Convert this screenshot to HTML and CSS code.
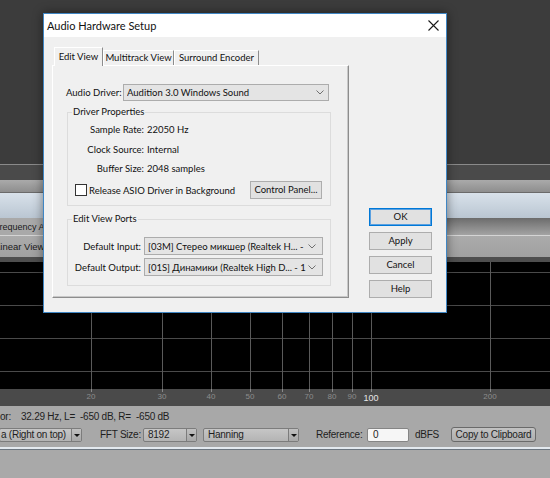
FILE: index.html
```html
<!DOCTYPE html>
<html>
<head>
<meta charset="utf-8">
<title>Audio Hardware Setup</title>
<link rel="stylesheet" href="styles.css">
</head>
<body>
<div class="app">
  <div class="top"></div>
  <div class="ln1"></div>
  <div class="darkband"></div>
  <div class="grayband"></div>
  <div class="ln2"></div>
  <div class="blueband"></div>
  <div class="tabstrip"><span class="apptab">Frequency Analysis</span></div>
  <div class="ln3"></div>
  <div class="viewbar"><span class="viewcombo">Linear View</span></div>
  <div class="ln4"></div>
  <div class="plot">
    <div class="hg" style="top:10px"></div>
    <div class="hg" style="top:43px"></div>
    <div class="hg" style="top:76px"></div>
    <div class="hg" style="top:109px"></div>
    <div class="vg" style="left:91px"></div>
    <div class="vg" style="left:162px"></div>
    <div class="vg" style="left:211px"></div>
    <div class="vg" style="left:250px"></div>
    <div class="vg" style="left:282px"></div>
    <div class="vg" style="left:309px"></div>
    <div class="vg" style="left:332px"></div>
    <div class="vg" style="left:352px"></div>
    <div class="vg" style="left:371px"></div>
    <div class="vg" style="left:490px"></div>
  </div>
  <div class="axis">
    <div class="tick" style="left:91px"></div><span class="alab" style="left:91px">20</span>
    <div class="tick" style="left:162px"></div><span class="alab" style="left:162px">30</span>
    <div class="tick" style="left:211px"></div><span class="alab" style="left:211px">40</span>
    <div class="tick" style="left:250px"></div><span class="alab" style="left:250px">50</span>
    <div class="tick" style="left:282px"></div><span class="alab" style="left:282px">60</span>
    <div class="tick" style="left:309px"></div><span class="alab" style="left:309px">70</span>
    <div class="tick" style="left:332px"></div><span class="alab" style="left:332px">80</span>
    <div class="tick" style="left:352px"></div><span class="alab" style="left:352px">90</span>
    <div class="tick" style="left:371px"></div><span class="alab major" style="left:371px">100</span>
    <div class="tick" style="left:490px"></div><span class="alab" style="left:490px">200</span>
  </div>
  <div class="status">
    <div class="srow1"><span class="cur">or:</span><span class="curval">32.29 Hz, L=&nbsp; -650 dB, R=&nbsp; -650 dB</span></div>
    <div class="srow2">
      <div class="scombo sc1"><span class="sctext">a (Right on top)</span><span class="scarrow"></span></div>
      <span class="slabel fftl">FFT Size:</span>
      <div class="scombo sc2"><span class="sctext">8192</span><span class="scarrow"></span></div>
      <div class="scombo sc3"><span class="sctext">Hanning</span><span class="scarrow"></span></div>
      <span class="slabel refl">Reference:</span>
      <div class="sinput">0</div>
      <span class="slabel dbfs">dBFS</span>
      <div class="sbtn">Copy to Clipboard</div>
    </div>
  </div>
  <div class="ln5"></div>
  <div class="ln6"></div>
  <div class="rest"></div>
</div>

<div class="dialog">
  <div class="titlebar">
    <span class="title">Audio Hardware Setup</span>
    <svg class="close" width="11" height="11" viewBox="0 0 11 11"><path d="M0.5 0.5L10.5 10.5M10.5 0.5L0.5 10.5" stroke="#1a1a1a" stroke-width="1.1" fill="none"/></svg>
  </div>
  <div class="dbody">
    <div class="leftcol">
      <div class="tabs">
        <div class="tab sel">Edit View</div>
        <div class="tab t2">Multitrack View</div>
        <div class="tab t3">Surround Encoder</div>
      </div>
      <div class="panel">
        <div class="driverrow">
          <span class="drvlbl">Audio Driver:</span>
          <div class="combo drvcombo"><span class="ctext">Audition 3.0 Windows Sound</span><svg class="chev" width="8" height="5" viewBox="0 0 8 5"><path d="M0.5 0.5L4 4L7.5 0.5" stroke="#707070" stroke-width="1" fill="none"/></svg></div>
        </div>
        <fieldset class="grp g1">
          <legend>Driver Properties</legend>
          <div class="props">
            <span class="k">Sample Rate:</span><span class="v">22050 Hz</span>
            <span class="k">Clock Source:</span><span class="v">Internal</span>
            <span class="k">Buffer Size:</span><span class="v">2048 samples</span>
          </div>
          <div class="chkrow">
            <span class="box"></span><span class="chklbl">Release ASIO Driver in Background</span>
            <div class="btn cpbtn">Control Panel...</div>
          </div>
        </fieldset>
        <fieldset class="grp g2">
          <legend>Edit View Ports</legend>
          <div class="ports">
            <span class="k">Default Input:</span>
            <div class="combo pcombo"><span class="ctext">[03M] Стерео микшер (Realtek H... -</span><svg class="chev" width="8" height="5" viewBox="0 0 8 5"><path d="M0.5 0.5L4 4L7.5 0.5" stroke="#707070" stroke-width="1" fill="none"/></svg></div>
            <span class="k">Default Output:</span>
            <div class="combo pcombo"><span class="ctext">[01S] Динамики (Realtek High D... - 1</span><svg class="chev" width="8" height="5" viewBox="0 0 8 5"><path d="M0.5 0.5L4 4L7.5 0.5" stroke="#707070" stroke-width="1" fill="none"/></svg></div>
          </div>
        </fieldset>
      </div>
    </div>
    <div class="btncol">
      <div class="btn dbtn def">OK</div>
      <div class="btn dbtn">Apply</div>
      <div class="btn dbtn">Cancel</div>
      <div class="btn dbtn">Help</div>
    </div>
  </div>
</div>
</body>
</html>
```

FILE: styles.css
```css
* { box-sizing: border-box; }
html, body { margin: 0; padding: 0; }
body {
  width: 550px;
  height: 478px;
  overflow: hidden;
  position: relative;
  background: #3b3b3b;
  font-family: "Liberation Sans", Arial, sans-serif;
}

/* ---------- background application ---------- */
.app { display: flex; flex-direction: column; height: 478px; }
.app > div { flex: none; }
.top { height: 164px; background: #3c3c3c; }
.ln1 { height: 1px; background: #8a8a8a; }
.darkband { height: 15px; background: #4a4a4a; }
.grayband { height: 12px; background: linear-gradient(#aaaaaa, #8e8e8e); }
.ln2 { height: 1px; background: #6a6a6a; }
.blueband { height: 25px; background: linear-gradient(#d8e1ea, #bac6d2); }
.tabstrip {
  height: 17px;
  background: linear-gradient(#6c6c6c, #a3a3a3);
  display: flex;
  align-items: stretch;
}
.apptab {
  display: flex;
  align-items: center;
  margin-left: -6px;
  padding: 0 6px 0 0;
  background: #a9a9a9;
  font-size: 9px;
  color: #1a1a1a;
  white-space: nowrap;
}
.ln3 { height: 1px; background: #d4d4d4; }
.viewbar {
  height: 21px;
  background: linear-gradient(#ababab, #a0a0a0);
  display: flex;
  align-items: center;
}
.viewcombo {
  margin-left: -5px;
  font-size: 9.5px;
  color: #1a1a1a;
  white-space: nowrap;
}
.ln4 { height: 5px; background: #4e4e4e; }
.plot { height: 127px; background: #000; position: relative; }
.hg { position: absolute; left: 0; right: 0; height: 1px; background: #4a4a4a; }
.vg { position: absolute; top: 0; bottom: 0; width: 1px; background: #5a5a5a; }
.axis { height: 17px; background: #4a4a4a; position: relative; }
.tick { position: absolute; top: 0; width: 1px; height: 3px; background: #8a8a8a; }
.alab {
  position: absolute;
  top: 3px;
  transform: translateX(-50%);
  font-size: 8px;
  color: #8c8c8c;
}
.alab.major { color: #e6e6e6; font-size: 9px; top: 4px; }

.status {
  height: 41px;
  background: #a8a8a8;
  display: flex;
  flex-direction: column;
  font-size: 10px;
  letter-spacing: -0.25px;
  color: #1e1e1e;
}
.srow1 { height: 20px; display: flex; align-items: center; padding-top: 1px; }
.cur { width: 21px; }
.srow2 { height: 17px; display: flex; align-items: center; }
.scombo {
  height: 14px;
  display: flex;
  border: 1px solid #7c7c7c;
  border-radius: 2px;
  background: linear-gradient(#c6c6c6, #b4b4b4);
}
.sctext { flex: 1; padding-left: 4px; line-height: 12px; white-space: nowrap; overflow: hidden; }
.scarrow {
  width: 10px;
  border-left: 1px solid #7c7c7c;
  background: linear-gradient(#c0c0c0, #a8a8a8);
  position: relative;
}
.scarrow::after {
  content: "";
  position: absolute;
  left: 2px;
  top: 5px;
  border-left: 3px solid transparent;
  border-right: 3px solid transparent;
  border-top: 3px solid #111;
}
.sc1 { width: 83px; margin-left: -1px; }
.sc1 .sctext { padding-left: 1px; }
.slabel { white-space: nowrap; }
.fftl { margin-left: 18px; width: 43px; }
.sc2 { width: 54px; margin-left: 0; }
.sc3 { width: 96px; margin-left: 6px; }
.refl { margin-left: 17px; width: 51px; }
.sinput {
  width: 42px;
  height: 14px;
  background: #f6f6f6;
  border: 1px solid #858585;
  border-radius: 2px;
  padding-left: 5px;
  line-height: 12px;
}
.dbfs { margin-left: 6px; width: 36px; }
.sbtn {
  width: 85px;
  height: 15px;
  border: 1px solid #6a6a6a;
  border-radius: 3px;
  background: linear-gradient(#c2c2c2, #aeaeae);
  text-align: center;
  line-height: 13px;
  white-space: nowrap;
}
.ln5 { height: 2px; background: #e3e9ef; }
.ln6 { height: 1px; background: #6c7680; }
.rest { flex: 1 !important; background: #a9a9a9; }

/* ---------- dialog ---------- */
.dialog {
  position: absolute;
  left: 43px;
  top: 13px;
  width: 404px;
  height: 300px;
  border: 1px solid #3f86c4;
  background: #f0f0f0;
  box-shadow: 0 0 10px rgba(0, 0, 0, 0.45);
  display: flex;
  flex-direction: column;
  font-family: Lato, Roboto, "Noto Sans", sans-serif;
  font-size: 9.5px;
  color: #111;
}
.titlebar {
  height: 23px;
  flex: none;
  background: #fff;
  display: flex;
  align-items: center;
  justify-content: space-between;
  padding: 0 7px 0 3px;
}
.title { font-size: 11px; color: #111; }
.close { display: block; }

.dbody {
  flex: 1;
  display: flex;
  align-items: flex-end;
  padding: 10px 0 14px 8px;
}
.leftcol { width: 297px; display: flex; flex-direction: column; }
.tabs { height: 18px; display: flex; align-items: flex-end; padding-left: 2px; position: relative; z-index: 1; }
.tab {
  height: 15px;
  border-top: 1px solid #fff;
  border-left: 1px solid #fff;
  border-right: 1px solid #8d8d8d;
  text-align: center;
  line-height: 13px;
  white-space: nowrap;
}
.tab.sel { height: 19px; width: 49px; margin-bottom: -1px; background: #f0f0f0; line-height: 17px; }
.tab.t2 { width: 71px; }
.tab.t3 { width: 85px; }

.panel {
  height: 233px;
  border-top: 1px solid #fff;
  border-left: 1px solid #fff;
  border-right: 1px solid #8d8d8d;
  border-bottom: 1px solid #8d8d8d;
  box-shadow: inset -1px -1px 0 #c8c8c8;
  display: flex;
  flex-direction: column;
}
.driverrow { display: flex; align-items: center; margin: 18px 0 0 13px; height: 17px; }
.drvlbl { width: 57px; white-space: nowrap; }
.combo {
  height: 17px;
  display: flex;
  align-items: center;
  background: #e4e4e4;
  border: 1px solid #acacac;
  padding-left: 3px;
  white-space: nowrap;
}
.ctext { flex: 1; overflow: hidden; }
.chev { display: block; flex: none; }
.drvcombo { width: 206px; padding-right: 4px; }

.grp {
  margin: 0 0 0 14px;
  width: 264px;
  border: 1px solid #dcdcdc;
  padding: 0;
  min-width: 0;
}
.grp legend {
  margin-left: 4px;
  padding: 0 1px;
  line-height: 12px;
  font-size: 9.5px;
}
.g1 { margin-top: 5px; padding-bottom: 5px; }
.props {
  display: grid;
  grid-template-columns: 76px auto;
  column-gap: 3px;
  grid-auto-rows: 19.5px;
  align-items: center;
  margin-top: 2px;
}
.k { text-align: right; white-space: nowrap; }
.v { white-space: nowrap; }
.chkrow { display: flex; align-items: center; height: 20px; margin-top: 1.5px; padding-left: 7px; padding-right: 8px; }
.box { width: 12px; height: 12px; border: 1px solid #333; background: #fff; margin-right: 2px; }
.chklbl { white-space: nowrap; }
.btn {
  background: #e1e1e1;
  border: 1px solid #adadad;
  text-align: center;
  white-space: nowrap;
}
.cpbtn { margin-left: auto; width: 72px; height: 18px; line-height: 16px; }

.g2 { margin-top: 7px; padding-bottom: 9px; }
.ports {
  display: grid;
  grid-template-columns: 73px 179px;
  column-gap: 3px;
  row-gap: 3px;
  grid-auto-rows: 18px;
  align-items: center;
  margin-top: 12px;
}
.pcombo { height: 18px; padding-right: 6px; }

.btncol { display: flex; flex-direction: column; gap: 6px; margin-left: 20px; }
.dbtn { width: 63px; height: 18px; line-height: 16px; }
.dbtn.def { border-color: #0078d7; box-shadow: inset 0 0 0 1px #5aa0e0; }
```
